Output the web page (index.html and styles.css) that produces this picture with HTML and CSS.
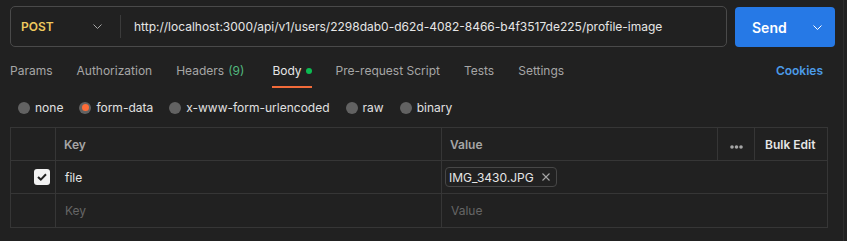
FILE: index.html
```html
<!DOCTYPE html>
<html lang="en">
<head>
    <meta charset="UTF-8" />
    <title>Request</title>
    <link rel="stylesheet" href="styles.css">
</head>
<body>
<div class="app">
    <div class="request-bar">
        <div class="url-box">
            <div class="method">
                <span class="method-name">POST</span>
                <svg class="chevron" width="9" height="5" viewBox="0 0 9 5"><path d="M0.5 0.5 L4.5 4.5 L8.5 0.5" fill="none" stroke="#a6a6a6" stroke-width="1"/></svg>
            </div>
            <div class="divider"></div>
            <div class="url">http://localhost:3000/api/v1/users/2298dab0-d62d-4082-8466-b4f3517de225/profile-image</div>
        </div>
        <button class="send">
            <span>Send</span>
            <svg class="chevron" width="9" height="5" viewBox="0 0 9 5"><path d="M0.5 0.5 L4.5 4.5 L8.5 0.5" fill="none" stroke="#ffffff" stroke-width="1"/></svg>
        </button>
    </div>

    <div class="tabs">
        <div class="tab">Params</div>
        <div class="tab">Authorization</div>
        <div class="tab headers">Headers <span class="count">(9)</span></div>
        <div class="tab active">Body <span class="dot"></span></div>
        <div class="tab">Pre-request Script</div>
        <div class="tab">Tests</div>
        <div class="tab">Settings</div>
        <div class="tab cookies">Cookies</div>
    </div>

    <div class="body-types">
        <label class="radio"><span class="circle"></span>none</label>
        <label class="radio"><span class="circle selected"></span>form-data</label>
        <label class="radio"><span class="circle"></span>x-www-form-urlencoded</label>
        <label class="radio"><span class="circle"></span>raw</label>
        <label class="radio"><span class="circle"></span>binary</label>
    </div>

    <table class="params">
        <colgroup>
            <col style="width:45px">
            <col style="width:386px">
            <col style="width:276px">
            <col style="width:37px">
            <col style="width:73px">
        </colgroup>
        <tr class="head">
            <td></td>
            <td>Key</td>
            <td>Value</td>
            <td class="more">
                <svg width="13" height="4" viewBox="0 0 13 4"><circle cx="2" cy="2" r="1.8" fill="#a6a6a6"/><circle cx="6.5" cy="2" r="1.8" fill="#a6a6a6"/><circle cx="11" cy="2" r="1.8" fill="#a6a6a6"/></svg>
            </td>
            <td class="bulk">Bulk Edit</td>
        </tr>
        <tr>
            <td class="check-cell">
                <span class="checkbox">
                    <svg width="10" height="8" viewBox="0 0 10 8"><path d="M1 4 L3.8 6.6 L9 1.2" fill="none" stroke="#212121" stroke-width="2"/></svg>
                </span>
            </td>
            <td class="key">file</td>
            <td colspan="3" class="value-cell">
                <span class="file-chip">IMG_3430.JPG
                    <svg width="8" height="8" viewBox="0 0 8 8"><path d="M0.5 0.5 L7.5 7.5 M7.5 0.5 L0.5 7.5" stroke="#a6a6a6" stroke-width="1.1"/></svg>
                </span>
            </td>
        </tr>
        <tr>
            <td></td>
            <td class="placeholder">Key</td>
            <td colspan="3" class="placeholder">Value</td>
        </tr>
    </table>
</div>
</body>
</html>
```

FILE: styles.css
```css
* {
    box-sizing: border-box;
    margin: 0;
    padding: 0;
}

body {
    background-color: #212121;
    font-family: Inter, 'Noto Sans', sans-serif;
    color: #e6e6e6;
    font-size: 12px;
}

.app {
    width: 844px;
    height: 241px;
    border-right: 1px solid #2d2d2d;
    padding: 6px 8px 0 10px;
}

.request-bar {
    display: flex;
    gap: 8px;
    height: 41px;
}

.url-box {
    flex: 1;
    display: flex;
    align-items: center;
    border: 1px solid #4a4a4a;
    border-radius: 5px;
}

.method {
    width: 109px;
    display: flex;
    align-items: center;
    justify-content: space-between;
    padding: 0 18px 0 10px;
}

.method-name {
    color: #efc95e;
    font-weight: 600;
    font-size: 12px;
}

.divider {
    width: 1px;
    height: 23px;
    background-color: #3b3b3b;
}

.url {
    padding-left: 13px;
    font-size: 12px;
    color: #e6e6e6;
    white-space: nowrap;
}

.send {
    width: 100px;
    height: 40px;
    margin-top: 1px;
    border: none;
    border-radius: 4px;
    background-color: #2679e6;
    color: white;
    font-family: inherit;
    font-size: 14px;
    font-weight: 600;
    display: flex;
    align-items: center;
    justify-content: space-between;
    padding: 0 13px 0 17px;
}

.tabs {
    display: flex;
    gap: 24px;
    margin-top: 9px;
    padding-right: 12px;
}

.tab {
    padding: 7px 0;
    line-height: 16px;
    color: #a6a6a6;
    border-bottom: 2px solid transparent;
    display: flex;
    align-items: center;
    gap: 4px;
}

.tab.headers {
    margin-right: 4px;
}

.tab.active {
    color: #e6e6e6;
    border-bottom-color: #f26b3a;
}

.count {
    color: #52b77f;
}

.dot {
    width: 6px;
    height: 6px;
    border-radius: 50%;
    background-color: #0cbb52;
}

.tab.cookies {
    margin-left: auto;
    color: #4c9be8;
    font-weight: 600;
}

.body-types {
    display: flex;
    gap: 16px;
    height: 39px;
    align-items: center;
    padding-left: 8px;
}

.radio {
    display: flex;
    align-items: center;
    gap: 5px;
    color: #e0e0e0;
}

.circle {
    width: 12px;
    height: 12px;
    border-radius: 50%;
    background-color: #626262;
    display: flex;
    align-items: center;
    justify-content: center;
}

.circle.selected::after {
    content: '';
    width: 7px;
    height: 7px;
    border-radius: 50%;
    background-color: #ff6c37;
}

.params {
    border-collapse: collapse;
    table-layout: fixed;
    width: 817px;
    font-size: 12px;
}

.params td {
    border: 1px solid #363636;
    height: 33px;
    padding: 0 8px;
    white-space: nowrap;
}

.params tr:last-child td {
    height: 34px;
}

.head td {
    color: #a6a6a6;
    font-weight: 600;
}

.head td.more {
    padding: 0;
    text-align: center;
}

.head td.bulk {
    color: #e6e6e6;
    padding-left: 10px;
}

.check-cell {
    text-align: right;
    padding-right: 5px !important;
}

.checkbox {
    display: inline-flex;
    align-items: center;
    justify-content: center;
    width: 16px;
    height: 16px;
    border-radius: 3px;
    background-color: #f2f2f2;
    vertical-align: middle;
}

.key {
    color: #e6e6e6;
    padding-left: 9px !important;
}

.value-cell {
    padding-left: 3px !important;
}

.file-chip {
    display: inline-flex;
    align-items: center;
    gap: 8px;
    height: 20px;
    padding: 0 6px 0 3px;
    border: 1px solid #474747;
    border-radius: 4px;
    color: #e6e6e6;
}

.placeholder {
    color: #666666;
    padding-left: 9px !important;
}
```
